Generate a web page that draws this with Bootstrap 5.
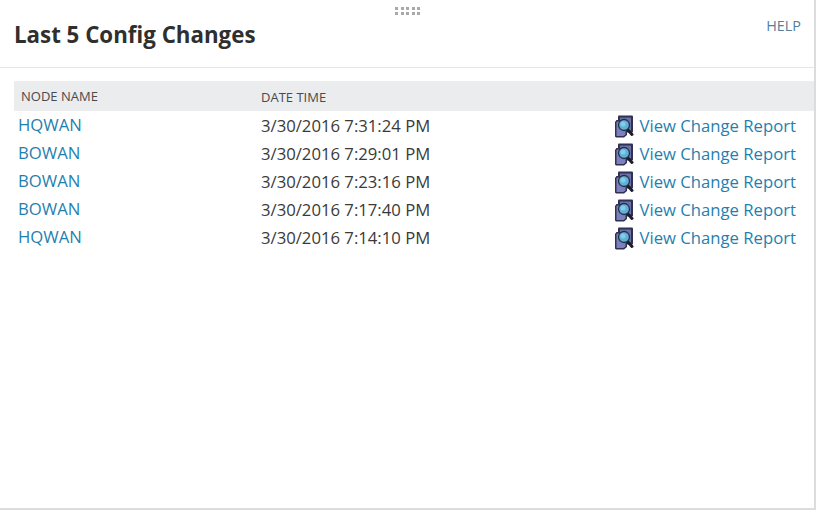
<!DOCTYPE html>
<html lang="en">
<head>
<meta charset="utf-8">
<title>Last 5 Config Changes</title>
<link href="https://cdn.jsdelivr.net/npm/bootstrap@5.3.0/dist/css/bootstrap.min.css" rel="stylesheet">
<style>
html,body{height:100%;}
body{font-family:"Open Sans",sans-serif;background:#fff;color:#333;overflow:hidden;}
.panel-frame{height:510px;border-right:2px solid #dcdcdc;border-bottom:2px solid #dcdcdc;position:relative;}
.grip{position:absolute;left:395px;top:7px;width:26px;display:grid;grid-template-columns:repeat(5,3px);gap:2px 2.5px;}
.grip i{display:block;width:3px;height:3px;background:#a9a9a9;}
.panel-head{height:68px;border-bottom:1px solid #e6e6e6;padding:0 15px 0 15px;}
.panel-title{font-size:22.3px;font-weight:700;line-height:30px;margin:20px 0 0 -1px;color:#2f2f2f;}
.help-link{font-size:14.4px;line-height:20px;margin-top:16px;margin-right:-2px;color:#4f7f9c;text-decoration:none;}
.changes{margin:13px 0 0 14px;width:800px;table-layout:fixed;border-collapse:collapse;}
.changes th{background:#ebecee;font-size:13px;font-weight:400;color:#4a4a4a;height:30px;padding:4px 0 0 13px;vertical-align:middle;}
.changes th.first{padding-left:7px;padding-top:4px;padding-bottom:2px;}
.changes td{height:28px;padding:2px 0 0 13px;font-size:16.7px;line-height:22px;color:#3a3a3a;vertical-align:middle;border:0;}
.changes td.first{padding-left:4px;padding-top:0;}
.changes td.last{padding:2px 18px 0 0;text-align:right;}
.changes a{color:#1f7fae;text-decoration:none;}
.report-icon{width:20px;height:23px;vertical-align:-6px;margin-right:5px;}
</style>
</head>
<body>
<div class="panel-frame">
  <div class="grip"><i></i><i></i><i></i><i></i><i></i><i></i><i></i><i></i><i></i><i></i></div>
  <div class="panel-head d-flex justify-content-between align-items-start">
    <h1 class="panel-title">Last 5 Config Changes</h1>
    <a class="help-link" href="#">HELP</a>
  </div>
  <svg width="0" height="0" class="d-block position-absolute"><defs><symbol id="rep" viewBox="0 0 20 23"><rect x="4" y="0.500" width="15" height="17" rx="1" fill="#2f3150"/><rect x="6" y="2.500" width="11" height="13" fill="#6d70ad"/><path d="M1 7l1.500-2H13v15l-3 2.500H2l-1-1z" fill="#2f3150"/><path d="M2.500 7.500l1-1H11.500v13l-2 1.500H2.500z" fill="#7d80bf"/><path d="M13.500 14.500l4.500 5" stroke="#1c1d28" stroke-width="3" stroke-linecap="round"/><circle cx="10" cy="10" r="5.500" fill="#5fb0da" stroke="#25303f" stroke-width="1.300"/><circle cx="9" cy="9" r="2.500" fill="#86cbe8"/></symbol></defs></svg>
  <table class="changes">
    <colgroup><col style="width:234px"><col style="width:200px"><col></colgroup>
    <thead><tr><th class="first">NODE NAME</th><th>DATE TIME</th><th></th></tr></thead>
    <tbody>
      <tr><td class="first"><a href="#">HQWAN</a></td><td>3/30/2016 7:31:24 PM</td><td class="last"><svg class="report-icon"><use href="#rep"/></svg><a href="#">View Change Report</a></td></tr>
      <tr><td class="first"><a href="#">BOWAN</a></td><td>3/30/2016 7:29:01 PM</td><td class="last"><svg class="report-icon"><use href="#rep"/></svg><a href="#">View Change Report</a></td></tr>
      <tr><td class="first"><a href="#">BOWAN</a></td><td>3/30/2016 7:23:16 PM</td><td class="last"><svg class="report-icon"><use href="#rep"/></svg><a href="#">View Change Report</a></td></tr>
      <tr><td class="first"><a href="#">BOWAN</a></td><td>3/30/2016 7:17:40 PM</td><td class="last"><svg class="report-icon"><use href="#rep"/></svg><a href="#">View Change Report</a></td></tr>
      <tr><td class="first"><a href="#">HQWAN</a></td><td>3/30/2016 7:14:10 PM</td><td class="last"><svg class="report-icon"><use href="#rep"/></svg><a href="#">View Change Report</a></td></tr>
    </tbody>
  </table>
</div>
<script src="https://cdn.jsdelivr.net/npm/bootstrap@5.3.0/dist/js/bootstrap.bundle.min.js"></script>
</body>
</html>
